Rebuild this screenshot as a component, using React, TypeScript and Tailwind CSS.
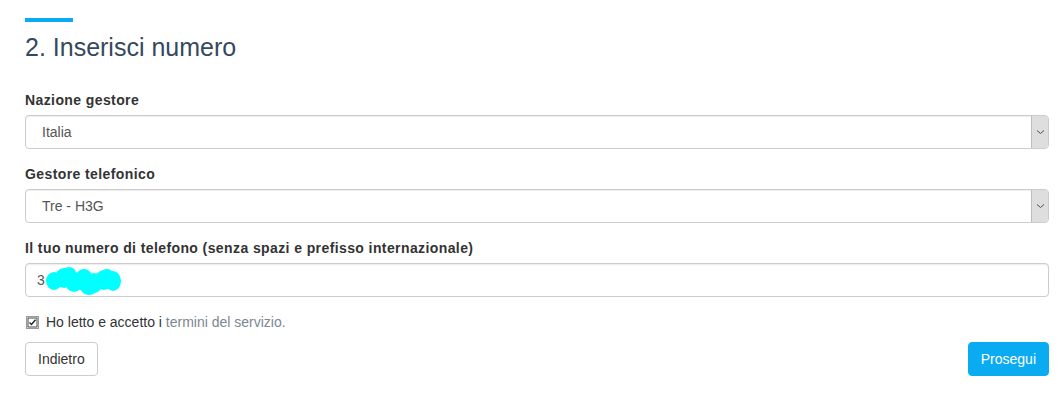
function SelectBox({ value }: { value: string }) {
  return (
    <div className="flex h-[34px] w-full items-stretch rounded-[4px] border border-[#cccccc] bg-white shadow-[inset_0_1px_1px_rgba(0,0,0,0.075)]">
      <div className="flex flex-1 items-center pl-[16px] text-[14px] text-[#555555]">{value}</div>
      <div className="flex w-[17px] items-center justify-center rounded-r-[3px] border-l border-[#bdbdbd] bg-[#dedede]">
        <svg width="9" height="6" viewBox="0 0 9 6" fill="none">
          <path d="M1 1.5 L4.5 4.5 L8 1.5" stroke="#505050" strokeWidth="1" />
        </svg>
      </div>
    </div>
  );
}

function Label({ children }: { children: React.ReactNode }) {
  return (
    <div className="mb-[5px] text-[14px] font-bold leading-[20px] tracking-[0.4px] text-[#333333]">{children}</div>
  );
}

export default function App() {
  return (
    <div className="min-h-[416px] w-[1063px] bg-white font-['Liberation_Sans',Arial,sans-serif]">
      <div className="ml-[25px] w-[1024px] pt-[18px]">
        <div className="h-[4px] w-[48px] bg-[#0aabf0]" />
        <h2 className="mt-[11px] text-[25px] leading-[28px] text-[#34495e]">2. Inserisci numero</h2>

        <div className="mt-[29px]">
          <Label>Nazione gestore</Label>
          <SelectBox value="Italia" />
        </div>

        <div className="mt-[15px]">
          <Label>Gestore telefonico</Label>
          <SelectBox value="Tre - H3G" />
        </div>

        <div className="mt-[15px]">
          <Label>Il tuo numero di telefono (senza spazi e prefisso internazionale)</Label>
          <div className="relative flex h-[34px] w-full items-center rounded-[4px] border border-[#cccccc] bg-white pl-[11px] text-[14px] text-[#555555] shadow-[inset_0_1px_1px_rgba(0,0,0,0.075)]">
            <span>3</span>
            <svg className="absolute left-[19px] top-[2px]" width="78" height="30" viewBox="0 0 78 30">
              <g fill="#00ffff">
                <ellipse cx="9" cy="15" rx="8" ry="9" />
                <ellipse cx="19" cy="12" rx="9" ry="10" />
                <ellipse cx="29" cy="16" rx="9" ry="10" />
                <ellipse cx="39" cy="14" rx="9" ry="11" />
                <ellipse cx="49" cy="17" rx="9" ry="10" />
                <ellipse cx="59" cy="14" rx="9" ry="10" />
                <ellipse cx="68" cy="15" rx="8" ry="10" />
                <ellipse cx="24" cy="7" rx="7" ry="6" />
                <ellipse cx="44" cy="23" rx="8" ry="6" />
                <ellipse cx="62" cy="8" rx="6" ry="5" />
              </g>
            </svg>
          </div>
        </div>

        <div className="mt-[15px] flex h-[20px] items-center text-[14px] text-[#333333]">
          <svg className="ml-[1px] mr-[7px]" width="13" height="13" viewBox="0 0 13 13" fill="none">
            <rect x="0.5" y="0.5" width="12" height="12" stroke="#333333" strokeDasharray="1 1" />
            <rect x="2" y="2" width="9" height="9" fill="#ffffff" stroke="#444444" />
            <path d="M3.5 6.5 L5.5 8.5 L9.5 3.8" stroke="#222222" strokeWidth="1.4" />
          </svg>
          <span>
            Ho letto e accetto i <span className="text-[#7b8794]">termini del servizio.</span>
          </span>
        </div>

        <div className="mt-[10px] flex items-center justify-between">
          <button className="h-[34px] rounded-[4px] border border-[#cccccc] bg-white px-[12px] text-[14px] text-[#333333]">
            Indietro
          </button>
          <button className="h-[34px] rounded-[4px] border border-[#0aabf0] bg-[#0aabf0] px-[12px] text-[14px] text-white">
            Prosegui
          </button>
        </div>
      </div>
    </div>
  );
}
